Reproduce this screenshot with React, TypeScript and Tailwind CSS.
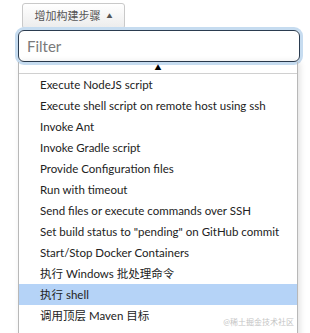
import React from "react";

const items = [
  "Execute NodeJS script",
  "Execute shell script on remote host using ssh",
  "Invoke Ant",
  "Invoke Gradle script",
  "Provide Configuration files",
  "Run with timeout",
  "Send files or execute commands over SSH",
  'Set build status to "pending" on GitHub commit',
  "Start/Stop Docker Containers",
  "执行 Windows 批处理命令",
  "执行 shell",
  "调用顶层 Maven 目标",
];

export default function App() {
  return (
    <div
      className="relative w-[310px] h-[333px] overflow-hidden bg-white"
      style={{ fontFamily: 'Lato, "Noto Sans CJK SC", sans-serif' }}
    >
      <div className="pt-[3px] pl-[22px]">
        <div className="flex h-[26px] w-[103px] items-center justify-center gap-[6px] rounded-[3px] border border-[#c9c9c9] bg-gradient-to-b from-white to-[#ececec] text-[11px] text-[#555]">
          <span>增加构建步骤</span>
          <span className="text-[6px] leading-none">▲</span>
        </div>
      </div>
      <div className="ml-[18px] mt-[1px] w-[282px]">
        <div className="flex h-[32px] items-center rounded-[6px] border border-[#2b3c50] pl-[8px] text-[15px] text-[#7a7a7a] shadow-[0_0_0_3px_#c6dcf0]">
          Filter
        </div>
      </div>
      <div className="ml-[18px] w-[280px] border-x border-[#b8b8b8] shadow-[2px_0_6px_rgba(0,0,0,0.12)]">
        <div className="flex h-[12px] items-center justify-center border-b border-[#d0d0d0]">
          <span className="text-[7px] leading-none text-black">▲</span>
        </div>
        {items.map((t) => (
          <div
            key={t}
            className={
              "h-[21px] pl-[21px] text-[11.5px] leading-[21px] text-[#222] whitespace-nowrap " +
              (t === "执行 shell" ? "bg-[#b5d3f7]" : "")
            }
          >
            {t}
          </div>
        ))}
        <div className="h-[20px]" />
      </div>
      <div className="absolute right-[16px] bottom-[5px] text-[8px] text-[#c4c4c4]">
        @稀土掘金技术社区
      </div>
    </div>
  );
}
